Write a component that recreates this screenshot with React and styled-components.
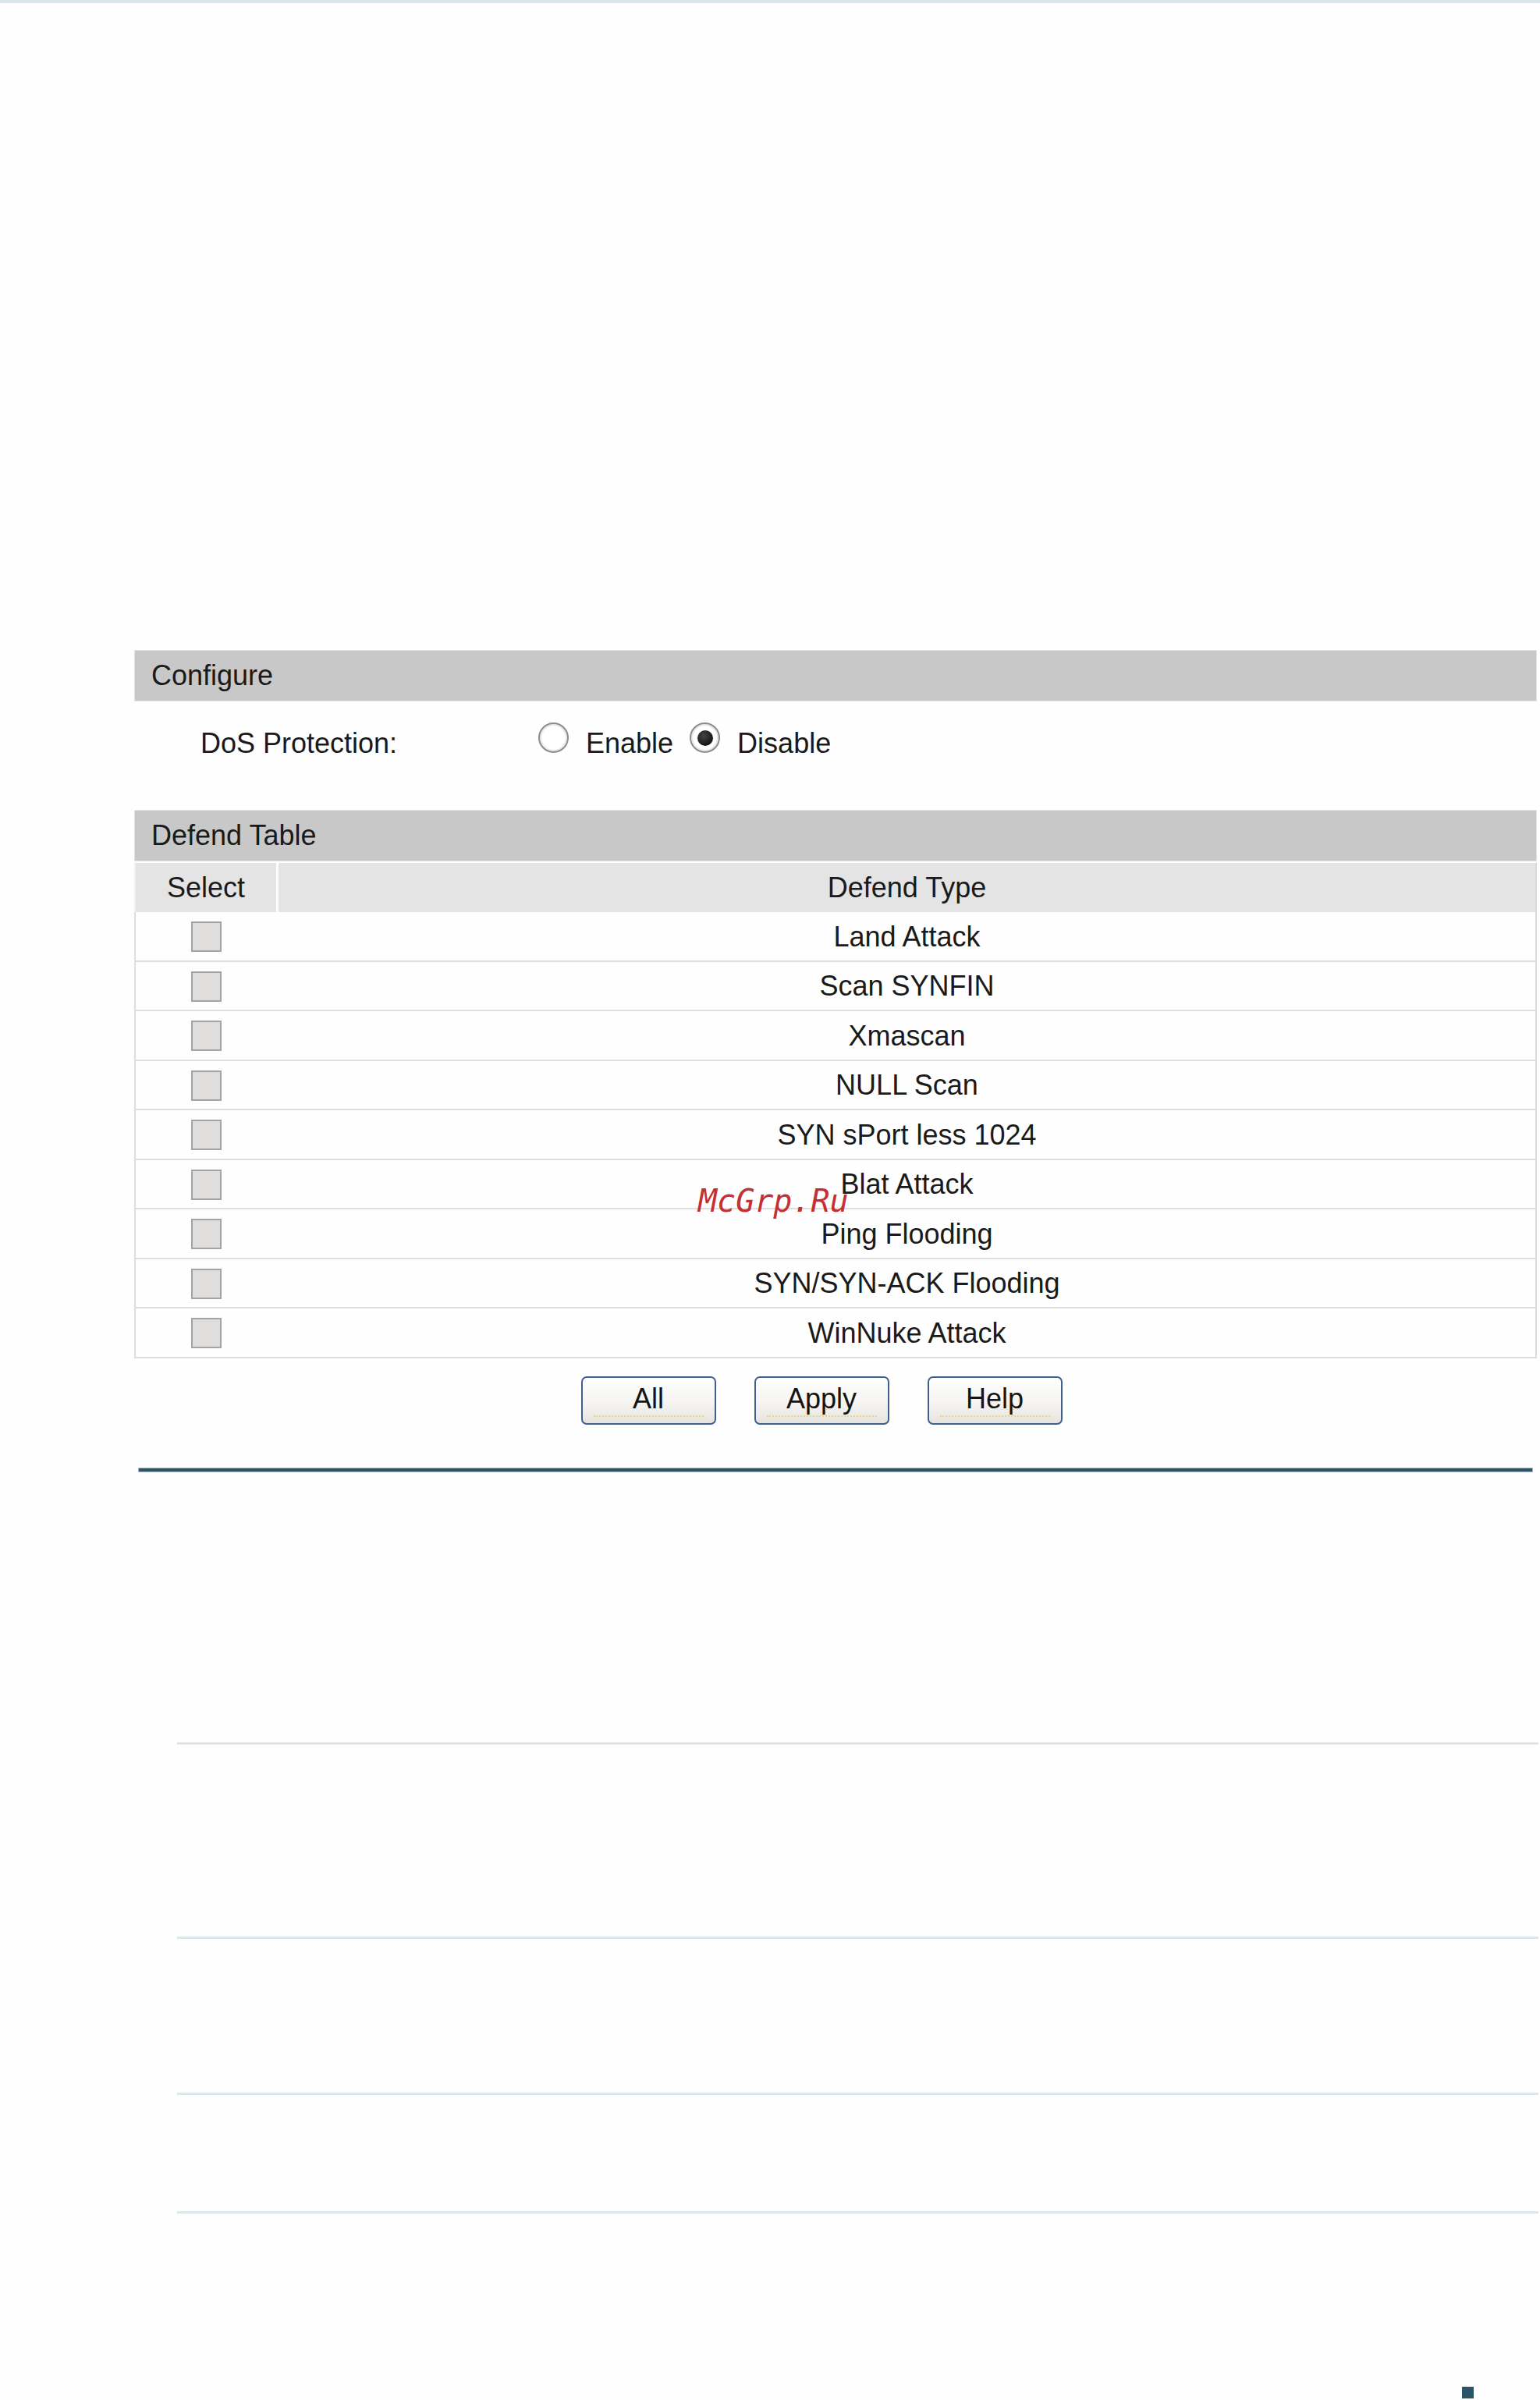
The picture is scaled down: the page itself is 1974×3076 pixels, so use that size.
import styled, { createGlobalStyle } from "styled-components";

const GlobalStyle = createGlobalStyle`
  html,
  body {
    margin: 0;
    padding: 0;
    background: #fefefe;
  }

  body {
    font-family: "Liberation Sans", Arial, sans-serif;
    color: #1a1a1a;
  }
`;

const Page = styled.div`
  position: relative;
  width: 1974px;
  height: 3076px;
  overflow: hidden;
  display: flex;
  flex-direction: column;
`;

const TopBand = styled.div`
  height: 4px;
  background: #dce6ea;
`;

const Panel = styled.section`
  margin: 829px 0 0 172px;
  width: 1798px;
  display: flex;
  flex-direction: column;
  font-size: 36px;
`;

const SectionBar = styled.div`
  box-sizing: border-box;
  height: 66px;
  display: flex;
  align-items: center;
  padding-left: 21px;
  background: #c8c8c8;
  border: 1px solid #e3e3e3;
`;

const OptionRow = styled.div`
  box-sizing: border-box;
  height: 139px;
  padding: 27px 0 0 85px;
  display: flex;
  align-items: flex-start;
`;

const FieldLabel = styled.span`
  width: 433px;
  padding-top: 8px;
  line-height: 38px;
`;

const RadioGroup = styled.div`
  display: flex;
  align-items: flex-start;
`;

const RadioMark = styled.span`
  box-sizing: border-box;
  width: 39px;
  height: 39px;
  border-radius: 50%;
  border: 2px solid #8c8c8c;
  background: radial-gradient(circle, #ffffff 55%, #f1f1f1 100%);
  box-shadow: inset 0 0 0 2px #e8e8e8;
  display: flex;
  align-items: center;
  justify-content: center;

  &::after {
    content: "";
    width: ${({ $checked }) => ($checked ? "20px" : "0")};
    height: ${({ $checked }) => ($checked ? "20px" : "0")};
    border-radius: 50%;
    background: radial-gradient(circle at 40% 35%, #444 0%, #161616 70%);
  }
`;

const RadioText = styled.span`
  padding: 8px 21px 0 22px;
  line-height: 38px;
`;

const Table = styled.div`
  margin-top: 2px;
  display: flex;
  flex-direction: column;
`;

const HeadRow = styled.div`
  display: grid;
  grid-template-columns: 180px 1fr;
  column-gap: 3px;
  height: 63px;
  border-left: 2px solid #f1f1f1;
  border-right: 2px solid #dadada;
`;

const HeadCell = styled.div`
  background: #e4e4e4;
  display: flex;
  align-items: center;
  justify-content: center;
`;

const BodyRow = styled.div`
  box-sizing: border-box;
  display: grid;
  grid-template-columns: 180px 1fr;
  column-gap: 3px;
  height: 63.5px;
  background: #fefefe;
  border-left: 2px solid #dedede;
  border-right: 2px solid #dadada;
  border-bottom: 2px solid #dedede;
`;

const BodyCell = styled.div`
  display: flex;
  align-items: center;
  justify-content: center;
  padding-top: 2px;
`;

const CheckBox = styled.span`
  box-sizing: border-box;
  width: 39px;
  height: 39px;
  border: 2px solid #a3a3a3;
  background: #dfdedc;
`;

const ButtonBar = styled.div`
  margin-top: 23px;
  padding-right: 36px;
  display: flex;
  justify-content: center;
  gap: 49px;
`;

const Button = styled.button`
  position: relative;
  box-sizing: border-box;
  width: 173px;
  height: 62px;
  padding: 0 0 4px;
  border: 2px solid #3f5f8e;
  border-radius: 7px;
  background: linear-gradient(#fefefe 0%, #f5f4f1 55%, #e6e4de 100%);
  font-family: "Liberation Sans", Arial, sans-serif;
  font-size: 36px;
  color: #151515;

  &::after {
    content: "";
    position: absolute;
    left: 14px;
    right: 14px;
    bottom: 8px;
    border-bottom: 2px dotted #efd488;
  }
`;

const DarkRule = styled.div`
  margin: 56px 0 0 178px;
  width: 1786px;
  height: 4px;
  background: #2e5567;
  box-shadow: 0 0 0 1px #a9bbc5;
`;

const DescList = styled.div`
  margin-left: 227px;
  width: 1745px;
  display: flex;
  flex-direction: column;
`;

const DescRow = styled.div`
  height: ${({ $h }) => $h}px;
  border-bottom: 3px solid #dde7eb;
`;

const PageFoot = styled.div`
  margin-top: 222px;
  padding-left: 1874px;
`;

const PageMark = styled.span`
  display: block;
  width: 15px;
  height: 15px;
  background: #2b5468;
`;

const Watermark = styled.span`
  position: absolute;
  left: 895px;
  top: 1519px;
  font-family: "DejaVu Sans Mono", monospace;
  font-style: italic;
  font-size: 40px;
  line-height: 40px;
  color: #c42f32;
  pointer-events: none;
`;

const defendTypes = [
  "Land Attack",
  "Scan SYNFIN",
  "Xmascan",
  "NULL Scan",
  "SYN sPort less 1024",
  "Blat Attack",
  "Ping Flooding",
  "SYN/SYN-ACK Flooding",
  "WinNuke Attack",
];

// heights of the (empty) description rows under the dark rule
const descGaps = [347, 246, 197, 149];

function Radio({ checked, children }) {
  return (
    <>
      <RadioMark $checked={checked} />
      <RadioText>{children}</RadioText>
    </>
  );
}

export default function App() {
  return (
    <Page>
      <GlobalStyle />
      <TopBand />

      <Panel>
        <SectionBar>Configure</SectionBar>
        <OptionRow>
          <FieldLabel>DoS Protection:</FieldLabel>
          <RadioGroup>
            <Radio>Enable</Radio>
            <Radio checked>Disable</Radio>
          </RadioGroup>
        </OptionRow>

        <SectionBar>Defend Table</SectionBar>
        <Table>
          <HeadRow>
            <HeadCell>Select</HeadCell>
            <HeadCell>Defend Type</HeadCell>
          </HeadRow>
          {defendTypes.map((type) => (
            <BodyRow key={type}>
              <BodyCell>
                <CheckBox />
              </BodyCell>
              <BodyCell>{type}</BodyCell>
            </BodyRow>
          ))}
        </Table>

        <ButtonBar>
          <Button>All</Button>
          <Button>Apply</Button>
          <Button>Help</Button>
        </ButtonBar>
      </Panel>

      <DarkRule />

      <DescList>
        {descGaps.map((h, i) => (
          <DescRow key={i} $h={h} />
        ))}
      </DescList>

      <PageFoot>
        <PageMark />
      </PageFoot>

      <Watermark>McGrp.Ru</Watermark>
    </Page>
  );
}
